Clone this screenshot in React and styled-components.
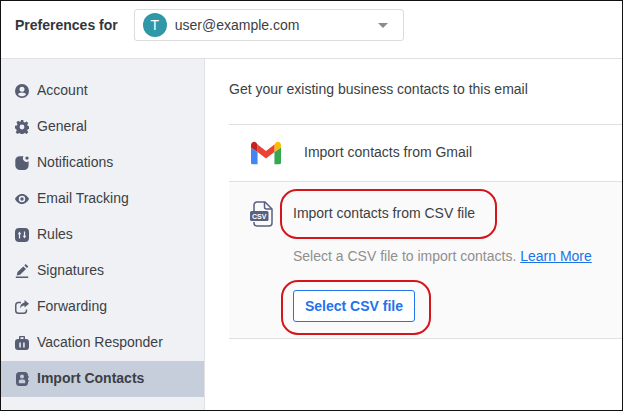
import styled, { createGlobalStyle } from "styled-components";

const GlobalStyle = createGlobalStyle`
  html, body {
    margin: 0;
    padding: 0;
    background: #fff;
  }
  * {
    box-sizing: border-box;
  }
`;

const Frame = styled.div`
  width: 623px;
  height: 411px;
  border: 1px solid #111;
  display: flex;
  flex-direction: column;
  overflow: hidden;
  font-family: "Liberation Sans", Arial, sans-serif;
  font-size: 14px;
  color: #3c3f44;
`;

const Header = styled.header`
  height: 58px;
  flex: none;
  display: flex;
  align-items: flex-start;
  gap: 16px;
  padding: 8px 0 0 14px;
  border-bottom: 1px solid #e0e0e0;
`;

const HeaderLabel = styled.span`
  font-weight: 700;
  line-height: 32px;
  color: #33363a;
`;

const AccountSelect = styled.div`
  width: 270px;
  height: 32px;
  display: flex;
  align-items: center;
  gap: 8px;
  padding: 0 15px 0 8px;
  border: 1px solid #dcdcdc;
  border-radius: 3px;
`;

const Avatar = styled.span`
  width: 24px;
  height: 24px;
  border-radius: 50%;
  background: #2f97a8;
  color: #fff;
  display: flex;
  align-items: center;
  justify-content: center;
`;

const AccountEmail = styled.span`
  flex: 1;
`;

const Caret = styled.span`
  width: 0;
  height: 0;
  border-left: 5px solid transparent;
  border-right: 5px solid transparent;
  border-top: 5px solid #8b8b8b;
`;

const Body = styled.div`
  flex: 1;
  display: flex;
  min-height: 0;
`;

const Sidebar = styled.nav`
  width: 204px;
  flex: none;
  padding-top: 14px;
  background: #eff1f5;
  border-right: 1px solid #dfe1e5;
`;

const NavItem = styled.div`
  height: 36px;
  display: flex;
  align-items: center;
  gap: 8px;
  padding-left: 14px;
  font-weight: ${(p) => (p.$active ? 700 : 400)};
  background: ${(p) => (p.$active ? "#c6cedb" : "transparent")};
`;

const NavLabel = styled.span`
  margin-bottom: 2px;
`;

const NavIcon = styled.svg`
  width: 14px;
  height: 14px;
  flex: none;
  fill: #575e73;
`;

const Main = styled.main`
  flex: 1;
  min-width: 0;
`;

const Intro = styled.p`
  margin: 0;
  height: 65px;
  padding: 22px 0 0 24px;
  line-height: 16px;
`;

const GmailRow = styled.section`
  height: 57px;
  display: flex;
  align-items: center;
  gap: 23px;
  padding: 0 0 2px 22px;
  margin-left: 24px;
  border-top: 1px solid #e0e0e0;
`;

const CsvRow = styled.section`
  height: 158px;
  display: flex;
  align-items: flex-start;
  gap: 20px;
  padding: 19px 0 0 21px;
  margin-left: 24px;
  background: #fafafa;
  border-top: 1px solid #e0e0e0;
  border-bottom: 1px solid #e0e0e0;
`;

const GmailIcon = styled.svg`
  width: 30px;
  height: 24px;
  flex: none;
  margin-top: 2px;
`;

const CsvIcon = styled.svg`
  width: 23px;
  height: 26px;
  flex: none;
`;

const RowBody = styled.div`
  display: flex;
  flex-direction: column;
  align-items: flex-start;
`;

const RowTitle = styled.div`
  position: relative;
  margin-top: 4px;
  line-height: 16px;
`;

const RowHint = styled.p`
  margin: 27px 0 0;
  line-height: 16px;
  color: #8f8f8f;
`;

const LearnMore = styled.a`
  color: #1a73e8;
  text-decoration: underline;
`;

const SelectButton = styled.button`
  position: relative;
  margin-top: 26px;
  width: 122px;
  height: 32px;
  padding: 0;
  border: 1px solid #2273ee;
  border-radius: 3px;
  background: #fff;
  color: #2273ee;
  font: 700 14px "Liberation Sans", Arial, sans-serif;
`;

const Callout = styled.span`
  position: absolute;
  border: 2px solid #d5141c;
  border-radius: 17px;
  pointer-events: none;
`;

const TitleCallout = styled(Callout)`
  left: -13px;
  top: -16px;
  width: 217px;
  height: 50px;
`;

const ButtonCallout = styled(Callout)`
  left: -13px;
  top: -11px;
  width: 150px;
  height: 55px;
`;

const navItems = [
  {
    label: "Account",
    icon: "M7 0a7 7 0 1 0 0 14A7 7 0 0 0 7 0zm0 2.7a2.500 2.500 0 1 1 0 5 2.500 2.500 0 0 1 0-5zM7 12.300c-1.700 0-3.200-.8-4-2.100.3-1.100 2.600-1.800 4-1.800s3.700.7 4 1.800c-.8 1.300-2.300 2.100-4 2.100z",
  },
  {
    label: "General",
    icon: "M5.800 0h2.400l.4 1.900 1.300.6 1.700-1.100 1.700 1.700-1.100 1.700.6 1.300 1.900.4v2.400l-1.900.4-.6 1.300 1.100 1.700-1.700 1.700-1.700-1.100-1.300.6-.4 1.900H5.800l-.4-1.900-1.300-.6-1.700 1.100-1.700-1.700 1.100-1.700-.6-1.300L0 8.200V5.800l1.900-.4.6-1.300-1.100-1.700 1.700-1.700 1.700 1.100 1.300-.6zM7 4.600a2.400 2.400 0 1 0 0 4.800 2.400 2.400 0 0 0 0-4.800z",
  },
  {
    label: "Notifications",
    icon: "M4.500.3h4.100a3.600 3.600 0 0 0 5 5V9.500A4.500 4.500 0 0 1 9 14H5A4.700 4.700 0 0 1 .3 9.500V4.500A4.200 4.200 0 0 1 4.500.3zM12 .4a1.700 1.700 0 1 1 0 3.400 1.700 1.700 0 0 1 0-3.400z",
  },
  {
    label: "Email Tracking",
    icon: "M7 2c3.500 0 6 2.700 7 5-1 2.300-3.500 5-7 5S1 9.300 0 7c1-2.300 3.500-5 7-5zm0 1.800a3.200 3.200 0 1 0 0 6.400 3.200 3.200 0 0 0 0-6.400zm0 1.500a1.700 1.700 0 1 1 0 3.400 1.700 1.700 0 0 1 0-3.400z",
  },
  {
    label: "Rules",
    icon: "M4 0h6a4 4 0 0 1 4 4v6a4 4 0 0 1-4 4H4a4 4 0 0 1-4-4V4a4 4 0 0 1 4-4zM4.500 3.500L2.700 6.300h1.200v4.200h1.200V6.300h1.200zM8.900 3.500v4.200H7.700l1.800 2.800 1.800-2.800h-1.200V3.500z",
  },
  {
    label: "Signatures",
    icon: "M10.700 0l2.600 2.600-1.300 1.400-2.700-2.600zM8.300 2.400l2.700 2.600-5.800 5.800-3.500.8.800-3.500zM.8 12.600h12.400V14H.8z",
  },
  {
    label: "Forwarding",
    icon: "M3.500 1.800H6v1.500H3.500a2 2 0 0 0-2 2v5.200a2 2 0 0 0 2 2h5.200a2 2 0 0 0 2-2V9.500h1.500v1a3.500 3.500 0 0 1-3.500 3.500H3.500A3.500 3.500 0 0 1 0 10.500V5.300a3.500 3.500 0 0 1 3.500-3.500zM9.500 0L14 3.800 9.500 7.600V5.500C7.500 5.500 6 6.500 5 8.500c0-3.500 1.700-5.500 4.500-6z",
  },
  {
    label: "Vacation Responder",
    icon: "M4.800 0h4.400a.8.8 0 0 1 .8.8V3h.8A3 3 0 0 1 14 6v5a3 3 0 0 1-3 3H3a3 3 0 0 1-3-3V6a3 3 0 0 1 3-3h1V.8a.8.8 0 0 1 .8-.8zM5.500 1.300V3h3V1.300zM4.300 6.500v5h1.500v-5zM8.200 6.500v5h1.500v-5z",
  },
  {
    label: "Import Contacts",
    active: true,
    icon: "M4.500 0h5A3.500 3.500 0 0 1 13 3.500V4h.6v2H13v2h.6v2H13v.5A3.500 3.500 0 0 1 9.500 14h-5A3.500 3.500 0 0 1 1 10.500v-7A3.500 3.500 0 0 1 4.500 0zM7 2.600a2 2 0 1 0 0 4 2 2 0 0 0 0-4zM5.500 7.600A1.700 1.700 0 0 0 3.800 9.300v2h6.400v-2a1.700 1.700 0 0 0-1.700-1.700z",
  },
];

export default function App() {
  return (
    <Frame>
      <GlobalStyle />
      <Header>
        <HeaderLabel>Preferences for</HeaderLabel>
        <AccountSelect>
          <Avatar>T</Avatar>
          <AccountEmail>user@example.com</AccountEmail>
          <Caret />
        </AccountSelect>
      </Header>
      <Body>
        <Sidebar>
          {navItems.map((item) => (
            <NavItem key={item.label} $active={item.active}>
              <NavIcon viewBox="0 0 14 14">
                <path fillRule="evenodd" d={item.icon} />
              </NavIcon>
              <NavLabel>{item.label}</NavLabel>
            </NavItem>
          ))}
        </Sidebar>
        <Main>
          <Intro>Get your existing business contacts to this email</Intro>
          <GmailRow>
            <GmailIcon viewBox="0 0 32 24">
              <path d="M2 24h5V11L0 6v16a2 2 0 0 0 2 2z" fill="#4285f4" />
              <path d="M25 24h5a2 2 0 0 0 2-2V6l-7 5z" fill="#34a853" />
              <path d="M25 3v8l7-5V3.500C32 .7 28.800-.9 26.600.8z" fill="#fbbc04" />
              <path d="M7 11V3l9 6.800L25 3v8l-9 6.800z" fill="#ea4335" />
              <path d="M0 3.500V6l7 5V3L5.400.8C3.200-.9 0 .7 0 3.500z" fill="#c5221f" />
            </GmailIcon>
            Import contacts from Gmail
          </GmailRow>
          <CsvRow>
            <CsvIcon viewBox="0 0 23 26">
              <path
                d="M4 10V4a3 3 0 0 1 3-3h8l7 7v14a3 3 0 0 1-3 3H7a3 3 0 0 1-3-3v-1"
                fill="none"
                stroke="#5a6082"
                strokeWidth="1.500"
              />
              <path d="M14.500 1v5a2 2 0 0 0 2 2h5.500" fill="none" stroke="#5a6082" strokeWidth="1.500" />
              <rect x="0" y="10" width="18.500" height="10" rx="1.500" fill="#5a6082" />
              <text
                x="9.250"
                y="17.800"
                textAnchor="middle"
                fontSize="7"
                fontWeight="700"
                fill="#fff"
                fontFamily="Liberation Sans"
              >
                CSV
              </text>
            </CsvIcon>
            <RowBody>
              <RowTitle>
                Import contacts from CSV file
                <TitleCallout />
              </RowTitle>
              <RowHint>
                Select a CSV file to import contacts. <LearnMore href="#">Learn More</LearnMore>
              </RowHint>
              <SelectButton>
                Select CSV file
                <ButtonCallout />
              </SelectButton>
            </RowBody>
          </CsvRow>
        </Main>
      </Body>
    </Frame>
  );
}
